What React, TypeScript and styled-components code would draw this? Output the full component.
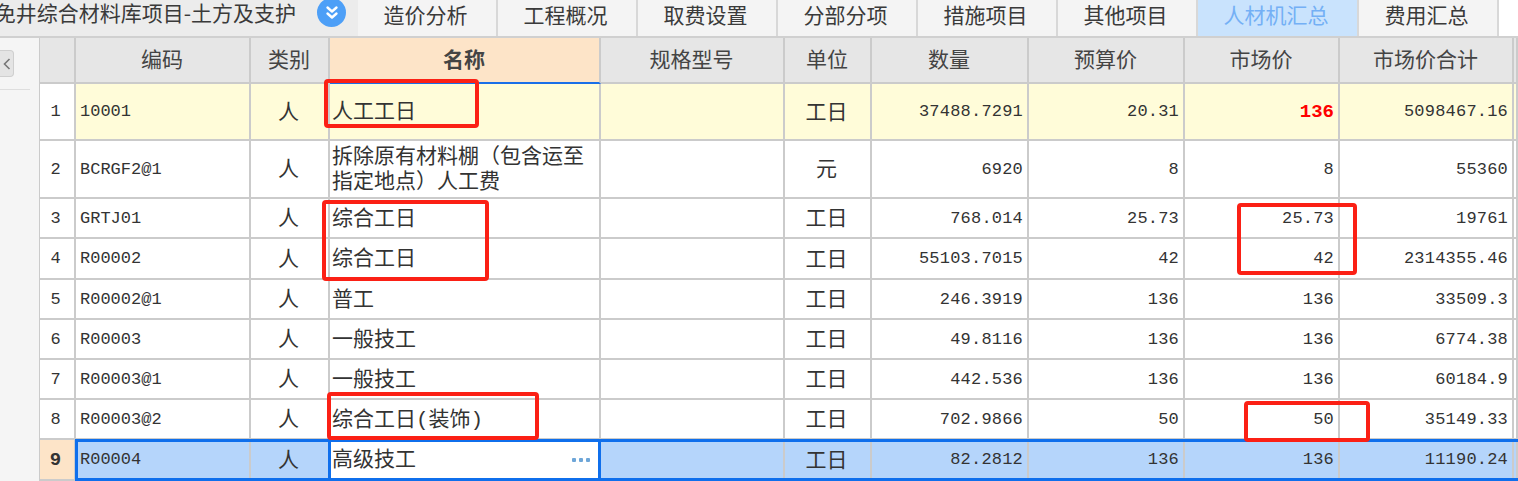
import styled, {createGlobalStyle} from "styled-components";

const GlobalStyle = createGlobalStyle`
    html, body {
        margin: 0;
        padding: 0;
        background: #fff;
        overflow: hidden;
    }
`

const cjk = `"Noto Sans CJK SC", "Liberation Sans", sans-serif`
const mono = `"Liberation Mono", "Noto Sans CJK SC", monospace`
const columns = "36px 175px 79px 271px 184px 87px 157px 156px 155px 174px 1fr"

type RowData = {
    no: number,
    code: string,
    name: string[],
    unit: string,
    qty: string,
    budget: string,
    market: string,
    total: string,
    height: number,
}

const tabs = ["造价分析", "工程概况", "取费设置", "分部分项", "措施项目", "其他项目", "人材机汇总", "费用汇总"]

const rows: RowData[] = [
    {no: 1, code: "10001", name: ["人工工日"], unit: "工日", qty: "37488.7291", budget: "20.31", market: "136", total: "5098467.16", height: 57},
    {no: 2, code: "BCRGF2@1", name: ["拆除原有材料棚（包含运至", "指定地点）人工费"], unit: "元", qty: "6920", budget: "8", market: "8", total: "55360", height: 58},
    {no: 3, code: "GRTJ01", name: ["综合工日"], unit: "工日", qty: "768.014", budget: "25.73", market: "25.73", total: "19761", height: 40},
    {no: 4, code: "R00002", name: ["综合工日"], unit: "工日", qty: "55103.7015", budget: "42", market: "42", total: "2314355.46", height: 41},
    {no: 5, code: "R00002@1", name: ["普工"], unit: "工日", qty: "246.3919", budget: "136", market: "136", total: "33509.3", height: 40},
    {no: 6, code: "R00003", name: ["一般技工"], unit: "工日", qty: "49.8116", budget: "136", market: "136", total: "6774.38", height: 40},
    {no: 7, code: "R00003@1", name: ["一般技工"], unit: "工日", qty: "442.536", budget: "136", market: "136", total: "60184.9", height: 40},
    {no: 8, code: "R00003@2", name: ["综合工日(装饰)"], unit: "工日", qty: "702.9866", budget: "50", market: "50", total: "35149.33", height: 40},
    {no: 9, code: "R00004", name: ["高级技工"], unit: "工日", qty: "82.2812", budget: "136", market: "136", total: "11190.24", height: 41},
]

const marks = [
    {left: 324, top: 79, width: 155, height: 49},
    {left: 322, top: 200, width: 167, height: 81},
    {left: 1237, top: 203, width: 120, height: 72},
    {left: 327, top: 392, width: 212, height: 48},
    {left: 1244, top: 401, width: 126, height: 41},
]

export default function App() {
    return (
        <Page>
            <GlobalStyle/>
            <TopBar>
                <TitleArea>
                    <Title>免井综合材料库项目-土方及支护</Title>
                    <ExpandButton>
                        <svg width="18" height="18" viewBox="0 0 18 18" fill="none" stroke="#fff" strokeWidth="2.4"
                             strokeLinecap="round" strokeLinejoin="round">
                            <path d="M4.5 3.5 9 7.5l4.5-4"/>
                            <path d="M4.5 9.5 9 13.5l4.5-4"/>
                        </svg>
                    </ExpandButton>
                </TitleArea>
                {tabs.map((tab) => (
                    <Tab key={tab} $active={tab === "人材机汇总"}>{tab}</Tab>
                ))}
                <TabRest/>
            </TopBar>
            <Body>
                <SidePanel>
                    <CollapseButton>
                        <svg width="8" height="14" viewBox="0 0 8 14" fill="none" stroke="#777" strokeWidth="1.6">
                            <path d="M6.5 2 1.5 7l5 5"/>
                        </svg>
                    </CollapseButton>
                    <SideLine/>
                </SidePanel>
                <Table>
                    <HeaderRow>
                        <HeaderCell/>
                        <HeaderCell>编码</HeaderCell>
                        <HeaderCell>类别</HeaderCell>
                        <HeaderCell $current>名称</HeaderCell>
                        <HeaderCell>规格型号</HeaderCell>
                        <HeaderCell>单位</HeaderCell>
                        <HeaderCell>数量</HeaderCell>
                        <HeaderCell>预算价</HeaderCell>
                        <HeaderCell>市场价</HeaderCell>
                        <HeaderCell>市场价合计</HeaderCell>
                        <HeaderCell/>
                    </HeaderRow>
                    {rows.map((row) => {
                        const selected = row.no === 9
                        return (
                            <Row key={row.no} $height={row.height} $tone={row.no === 1 ? "yellow" : selected ? "blue" : "plain"}>
                                <NumberCell $selected={selected}>{row.no}</NumberCell>
                                <CodeCell>{row.code}</CodeCell>
                                <CenterCell>人</CenterCell>
                                <NameCell $editing={selected}>
                                    <div>{row.name.map((line) => <NameLine key={line}>{line}</NameLine>)}</div>
                                    {selected && <MoreDots><Dot/><Dot/><Dot/></MoreDots>}
                                </NameCell>
                                <Cell/>
                                <CenterCell>{row.unit}</CenterCell>
                                <NumericCell>{row.qty}</NumericCell>
                                <NumericCell>{row.budget}</NumericCell>
                                <NumericCell $alert={row.no === 1}>{row.market}</NumericCell>
                                <NumericCell>{row.total}</NumericCell>
                                <Cell/>
                                {selected && <SelectionFrame/>}
                            </Row>
                        )
                    })}
                </Table>
            </Body>
            {marks.map((mark) => (
                <RedMark key={mark.left + "-" + mark.top} style={mark}/>
            ))}
        </Page>
    );
}

const Page = styled.div`
    position: relative;
    width: 1518px;
    height: 481px;
    overflow: hidden;
    font-family: ${cjk};
    color: #333;
    background: #fff;
`

const TopBar = styled.div`
    display: flex;
    height: 36px;
    border-bottom: 2px solid #d0d0d0;
    background: #f3f3f3;
`

const TitleArea = styled.div`
    display: flex;
    align-items: flex-start;
    justify-content: flex-end;
    width: 358px;
    padding-right: 12px;
    box-sizing: border-box;
    background: #ececec;
    overflow: hidden;
    flex-shrink: 0;
`

const Title = styled.div`
    font-size: 21px;
    line-height: 24px;
    white-space: nowrap;
    margin-right: 21px;
    color: #3a3a3a;
`

const ExpandButton = styled.div`
    display: flex;
    align-items: center;
    justify-content: center;
    width: 29px;
    height: 29px;
    margin-top: -2px;
    border-radius: 50%;
    background: #4d9ff7;
    flex-shrink: 0;
`

const Tab = styled.div<{ $active?: boolean }>`
    display: flex;
    align-items: center;
    justify-content: center;
    width: ${(props) => (props.$active ? "161px" : "140px")};
    box-sizing: border-box;
    padding: 0 3px 9px 0;
    border-right: 2px solid #d8d8d8;
    font-size: 21px;
    color: ${(props) => (props.$active ? "#74b0f5" : "#3a3a3a")};
    background: ${(props) => (props.$active ? "#c9e3fd" : "#f4f4f4")};
    flex-shrink: 0;
`

const TabRest = styled.div`
    flex: 1;
    background: #fff;
`

const Body = styled.div`
    display: flex;
    height: 443px;
`

const SidePanel = styled.div`
    width: 39px;
    flex-shrink: 0;
    padding-top: 12px;
    box-sizing: border-box;
    background: #f5f5f5;
`

const CollapseButton = styled.div`
    display: flex;
    align-items: center;
    justify-content: center;
    width: 13px;
    height: 25px;
    border: 1px solid #cfcfcf;
    border-left: none;
    border-radius: 0 4px 4px 0;
    background: #e4e4e4;
`

const SideLine = styled.div`
    height: 1px;
    margin-top: 12px;
    margin-right: 9px;
    background: #dedede;
`

const Table = styled.div`
    flex: 1;
    min-width: 0;
    border-left: 1px solid #cbcbcb;
`

const HeaderRow = styled.div`
    display: grid;
    grid-template-columns: ${columns};
    height: 46px;
`

const HeaderCell = styled.div<{ $current?: boolean }>`
    display: flex;
    align-items: center;
    justify-content: center;
    box-sizing: border-box;
    padding: 0 1px 5px 0;
    font-size: 21px;
    font-weight: ${(props) => (props.$current ? 700 : 400)};
    color: #444;
    background: ${(props) => (props.$current ? "#fde4c8" : "#e6e6e6")};
    border-right: 2px solid #cbcbcb;
    border-bottom: 2px solid ${(props) => (props.$current ? "#1a6fe8" : "#cbcbcb")};
`

const toneColors = {plain: "#fff", yellow: "#fffcd9", blue: "#b5d5fb"}

const Row = styled.div<{ $height: number, $tone: "plain" | "yellow" | "blue" }>`
    position: relative;
    display: grid;
    grid-template-columns: ${columns};
    height: ${(props) => props.$height}px;
    background: ${(props) => toneColors[props.$tone]};
`

const Cell = styled.div`
    display: flex;
    align-items: center;
    box-sizing: border-box;
    min-width: 0;
    border-right: 2px solid #cbcbcb;
    border-bottom: 2px solid #cbcbcb;
`

const NumberCell = styled(Cell)<{ $selected?: boolean }>`
    justify-content: center;
    padding-right: 3px;
    font-family: ${mono};
    font-size: ${(props) => (props.$selected ? "19px" : "17px")};
    font-weight: ${(props) => (props.$selected ? 700 : 400)};
    background: ${(props) => (props.$selected ? "#fde4c8" : "#fff")};
`

const CodeCell = styled(Cell)`
    padding-left: 4px;
    font-family: ${mono};
    font-size: 17px;
`

const CenterCell = styled(Cell)`
    justify-content: center;
    padding: 0 2px 4px 0;
    font-size: 21px;
`

const NameCell = styled(Cell)<{ $editing?: boolean }>`
    position: relative;
    padding: 2px 0 0 2px;
    font-family: ${mono};
    font-size: 21px;
    background: ${(props) => (props.$editing ? "#fff" : "transparent")};
`

const NameLine = styled.div`
    line-height: 25px;
    white-space: nowrap;
`

const MoreDots = styled.span`
    position: absolute;
    right: 9px;
    top: 18px;
    display: flex;
    gap: 3px;
`

const Dot = styled.i`
    display: block;
    width: 4px;
    height: 4px;
    border-radius: 1px;
    background: #6ea6d8;
`

const NumericCell = styled(Cell)<{ $alert?: boolean }>`
    justify-content: flex-end;
    padding-right: 4px;
    font-family: ${mono};
    font-size: ${(props) => (props.$alert ? "19px" : "17px")};
    letter-spacing: ${(props) => (props.$alert ? "0" : "0.2px")};
    font-weight: ${(props) => (props.$alert ? 700 : 400)};
    color: ${(props) => (props.$alert ? "#f00" : "#333")};
`

const SelectionFrame = styled.div`
    position: absolute;
    left: 35px;
    right: -5px;
    top: -1px;
    bottom: 0;
    border: 3px solid #0f6fec;
    pointer-events: none;

    &::after {
        content: "";
        position: absolute;
        left: 250px;
        top: 0;
        bottom: 0;
        width: 273px;
        box-sizing: border-box;
        border-left: 3px solid #0f6fec;
        border-right: 3px solid #0f6fec;
    }
`

const RedMark = styled.div`
    position: absolute;
    box-sizing: border-box;
    border: 4px solid #fb2015;
    border-radius: 4px;
    pointer-events: none;
`
